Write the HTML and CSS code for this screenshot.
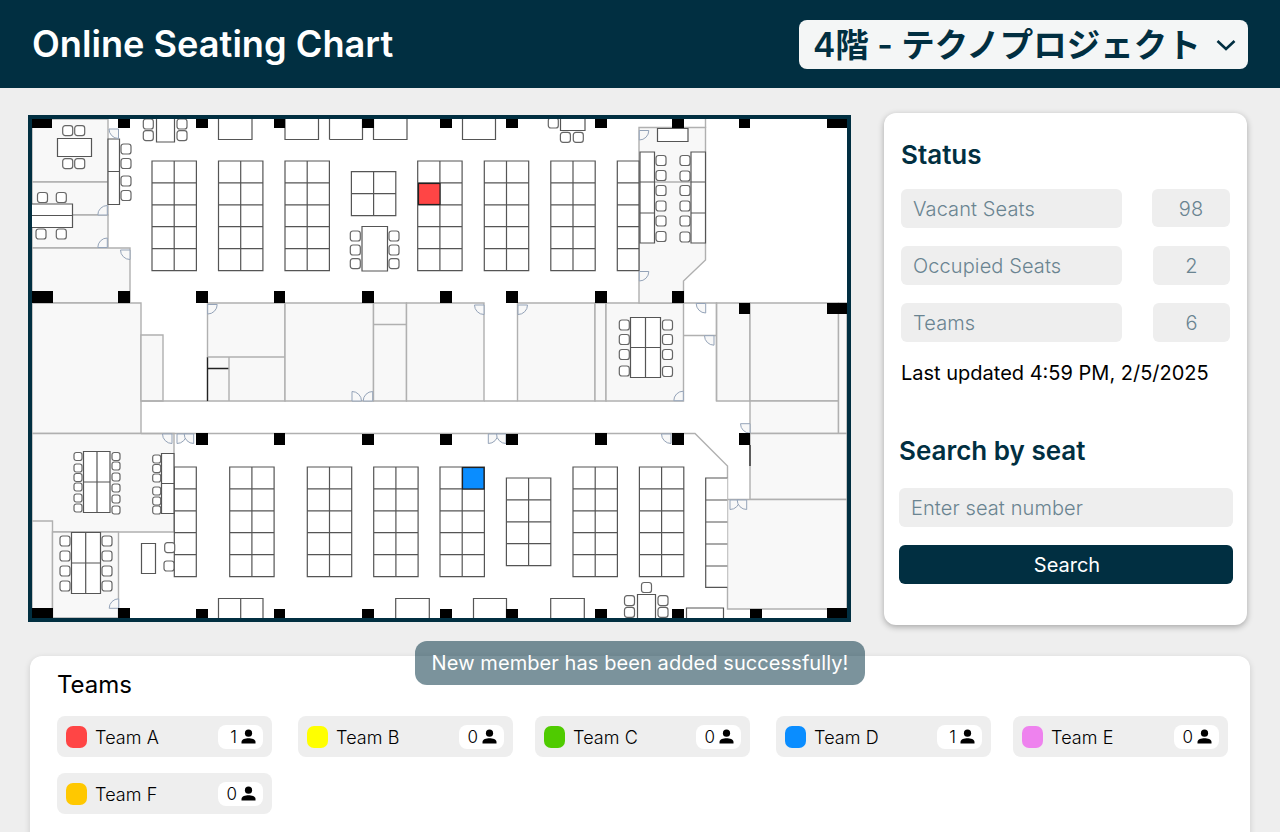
FILE: index.html
```html
<!DOCTYPE html>
<html lang="en">
<head>
    <meta charset="UTF-8">
    <meta name="viewport" content="width=device-width, initial-scale=1.0">
    <title>Online Seating Chart</title>
    <link rel="stylesheet" href="styles.css">
</head>
<body>
    <header class="topbar">
        <h1>Online Seating Chart</h1>
        <div class="floor-select">
            <span class="floor-name">4階 - テクノプロジェクト</span>
            <svg class="chevron" width="20" height="12" viewBox="0 0 20 12"><path d="M1.5 2l8.5 8 8.5-8"/></svg>
        </div>
    </header>

    <div class="toast">New member has been added successfully!</div>

    <main class="content">
        <div class="map">
            <svg width="815" height="499" viewBox="32 119 815 499">
                <defs>
                    <path id="b5" d="M0 0h44.4v109.6H0z M22.2 0v109.6 M0 21.9h44.4 M0 43.8h44.4 M0 65.7h44.4 M0 87.7h44.4"/>
                    <path id="b4" d="M0 0h44.4v87.7H0z M22.2 0v87.7 M0 21.9h44.4 M0 43.8h44.4 M0 65.7h44.4"/>
                    <path id="d-ll" d="M0 0H-9.5A9.5 9.5 0 0 0 0 9.5Z"/>
                    <path id="d-ul" d="M0 0H-9.5A9.5 9.5 0 0 1 0 -9.5Z"/>
                    <path id="d-lr" d="M0 0H9.5A9.5 9.5 0 0 1 0 9.5Z"/>
                    <path id="d-ur" d="M0 0H9.5A9.5 9.5 0 0 0 0 -9.5Z"/>
                    <rect id="c" width="10" height="10" rx="2.6"/>
                    <rect id="s" width="8" height="8" rx="2.2"/>
                </defs>

                <!-- rooms -->
                <g class="room">
                    <path d="M32 119H108V182H32z"/>
                    <path d="M32 182H108V215H32z"/>
                    <path d="M32 215H108V248H32z"/>
                    <path d="M32 248H130V303H32z"/>
                    <path d="M32 303H141V433.5H32z"/>
                    <path d="M141 335H163V401H141z"/>
                    <path d="M207.5 303H285V401H207.5z"/>
                    <path d="M285 303H373.5V401H285z"/>
                    <path d="M373.5 303H406.5V401H373.5z"/>
                    <path d="M373.5 324.5H406.5"/>
                    <path d="M406.5 303H484V401H406.5z"/>
                    <path d="M517.5 303H595V401H517.5z"/>
                    <path d="M595 303H606V401H595z"/>
                    <path d="M606 303H683.5V401H606z"/>
                    <path d="M716.5 303H750V401H716.5z"/>
                    <path d="M750 303H838.5V401H750z"/>
                    <path d="M750 401H838.5V433.5H750z"/>
                    <path d="M838.5 303H847V433.5H838.5z"/>
                    <path d="M750 433.5H847V499.5H750z"/>
                    <path d="M727.5 499.5H847V609H727.5z"/>
                    <path d="M32 433.5H174V532H32z"/>
                    <path d="M32 521H52.5V618H32z"/>
                    <path d="M52.5 532H118.5V618H52.5z"/>
                    <path d="M639 127.5H705.5V260L683.5 281V303H639z"/>
                    <path class="plain" d="M683.5 303H716.5V401 M683.5 335.5H716.5"/>
                    <path class="plain" d="M141 401H207.5 M484 401H517.5 M141 433.5H695L727.5 466V499.5 M705.5 119V128"/>
                    <path class="plain" d="M639 182H705.5"/>
                </g>
                <path class="thick" d="M207.5 357V401 M207.5 368.5H229"/>
                <path class="room-line" d="M207.5 357H285 M229 357V401"/>
                <path class="thick" d="M750 445V466"/>

                <!-- desks -->
                <g class="desk">
                    <use href="#b5" x="152" y="161"/>
                    <use href="#b5" x="218.5" y="161"/>
                    <use href="#b5" x="285" y="161"/>
                    <use href="#b5" x="417.7" y="161"/>
                    <use href="#b5" x="484.3" y="161"/>
                    <use href="#b5" x="550.8" y="161"/>
                    <path d="M617.3 161H639V270.6H617.3z M617.3 182.9H639 M617.3 204.8H639 M617.3 226.7H639 M617.3 248.7H639"/>
                    <path d="M351.4 171.7h44.4v44H351.4z M373.6 171.7v44 M351.4 193.7h44.4"/>

                    <use href="#b5" x="229.7" y="467"/>
                    <use href="#b5" x="307.3" y="467"/>
                    <use href="#b5" x="373.7" y="467"/>
                    <use href="#b5" x="440" y="467"/>
                    <use href="#b4" x="506.4" y="478"/>
                    <use href="#b5" x="573" y="467"/>
                    <use href="#b5" x="639.4" y="467"/>
                    <path d="M174.3 467H196.3V576.6H174.3z M174.3 488.9H196.3 M174.3 510.8H196.3 M174.3 532.7H196.3 M174.3 554.7H196.3"/>
                    <path d="M727.3 478H705.7V587.4H727.3 M705.7 500H727.3 M705.7 522H727.3 M705.7 544H727.3 M705.7 566H727.3"/>

                    <!-- tables along the walls -->
                    <path d="M156.5 119V142H174.5V119"/>
                    <path d="M218.5 119V139.5H252V119 M285 119V139.5H318.5V119 M329.5 139.5H362.5V119 M329.5 119V139.5 M373.5 119V139.5H407V119 M462.5 119V139.5H495.5V119"/>
                    <path d="M560.5 119V130.5H585V119"/>
                    <path d="M657.5 128.5H688V141.5H657.5z"/>
                    <path d="M57.5 138.5H91.5V156.5H57.5z"/>
                    <path d="M108 139H119.5V171.5H108z M108 171.5H119.5V204.5H108z"/>
                    <path d="M32 204H72.5V227.5H32 M32 215.5H72.5"/>
                    <path d="M362 226.5H387.5V271H362z"/>
                    <path d="M640 152H654.5V243H640z M640 182H654.5 M640 213H654.5"/>
                    <path d="M691 152H705.5V243H691z M691 182H705.5 M691 213H705.5"/>
                    <path d="M630.5 317.5H660.5V377.5H630.5z M645.5 317.5V377.5 M630.5 347.5H660.5"/>
                    <path d="M83.5 451.5H110V512.5H83.5z M97 451.5V512.5 M83.5 482H110"/>
                    <path d="M161.5 453.5H174V513.5H161.5z M161.5 483.5H174"/>
                    <path d="M71.5 532.5H100.5V593.5H71.5z M85.7 532.5V593.5 M71.5 563H100.5"/>
                    <path d="M141.5 543.5H155.5V573.5H141.5z"/>
                    <path d="M218.5 618V598.5H263V618 M240.7 598.5V618 M395.7 618V598.5H429.3V618 M473.5 618V598.5H506.5V618 M550.7 618V598.5H584.3V618"/>
                    <path d="M637.5 618V594.5H655.5V618 M686.5 618V608H723.5V618"/>
                </g>

                <!-- chairs -->
                <g class="chair">
                    <use href="#c" x="62.7" y="125.7"/><use href="#c" x="74.7" y="125.7"/>
                    <use href="#c" x="62.7" y="158.7"/><use href="#c" x="74.7" y="158.7"/>
                    <use href="#c" x="121" y="144"/><use href="#c" x="121" y="158.5"/>
                    <use href="#c" x="121" y="176"/><use href="#c" x="121" y="190.5"/>
                    <use href="#c" x="37.5" y="192.5"/><use href="#c" x="56.3" y="192.5"/>
                    <use href="#c" x="36" y="229"/><use href="#c" x="56.3" y="229"/>
                    <use href="#c" x="143.3" y="119"/><use href="#c" x="143.3" y="130.7"/>
                    <use href="#c" x="177" y="119"/><use href="#c" x="177" y="130.7"/>
                    <use href="#c" x="350.3" y="231"/><use href="#c" x="350.3" y="245"/><use href="#c" x="350.3" y="258.7"/>
                    <use href="#c" x="389" y="231"/><use href="#c" x="389" y="245"/><use href="#c" x="389" y="258.7"/>
                    <use href="#c" x="548.3" y="118"/>
                    <use href="#c" x="560.4" y="132.4"/><use href="#c" x="573.3" y="132.4"/>
                    <use href="#c" x="656" y="155.5"/><use href="#c" x="656" y="170.5"/><use href="#c" x="656" y="185.5"/>
                    <use href="#c" x="656" y="201"/><use href="#c" x="656" y="216"/><use href="#c" x="656" y="231.5"/>
                    <use href="#c" x="680" y="155.5"/><use href="#c" x="680" y="171"/><use href="#c" x="680" y="185.5"/>
                    <use href="#c" x="680" y="201"/><use href="#c" x="680" y="216"/><use href="#c" x="680" y="232"/>
                    <use href="#c" x="619.3" y="320"/><use href="#c" x="619.3" y="334.5"/><use href="#c" x="619.3" y="349.5"/><use href="#c" x="619.3" y="366"/>
                    <use href="#c" x="662.5" y="320"/><use href="#c" x="662.5" y="334.5"/><use href="#c" x="662.5" y="349.5"/><use href="#c" x="662.5" y="366.5"/>
                    <use href="#c" x="60" y="536"/><use href="#c" x="60" y="551"/><use href="#c" x="60" y="566"/><use href="#c" x="60" y="581"/>
                    <use href="#c" x="102" y="536"/><use href="#c" x="102" y="551"/><use href="#c" x="102" y="566"/><use href="#c" x="102" y="581"/>
                    <use href="#c" x="164.7" y="542.7"/><use href="#c" x="164" y="561"/>
                    <use href="#c" x="641.5" y="582.5"/>
                    <use href="#c" x="624.5" y="595.7"/><use href="#c" x="624.5" y="607.3"/>
                    <use href="#c" x="658" y="595.7"/><use href="#c" x="658" y="607.3"/>
                    <use href="#s" x="74" y="452.5"/><use href="#s" x="74" y="464"/><use href="#s" x="74" y="473.5"/>
                    <use href="#s" x="74" y="483"/><use href="#s" x="74" y="494"/><use href="#s" x="74" y="504"/>
                    <use href="#s" x="112" y="452.5"/><use href="#s" x="112" y="462"/><use href="#s" x="112" y="473"/>
                    <use href="#s" x="112" y="484"/><use href="#s" x="112" y="495"/><use href="#s" x="112" y="506"/>
                    <use href="#s" x="152.7" y="455"/><use href="#s" x="152.7" y="464.5"/><use href="#s" x="152.7" y="474"/>
                    <use href="#s" x="152.7" y="487"/><use href="#s" x="152.7" y="497"/><use href="#s" x="152.7" y="506"/>
                </g>

                <!-- doors -->
                <g class="door">
                    <use href="#d-ll" x="118.5" y="129"/>
                    <use href="#d-ul" x="107.3" y="215"/>
                    <use href="#d-ul" x="107.3" y="247.5"/>
                    <use href="#d-ll" x="130" y="250"/>
                    <use href="#d-lr" x="207.7" y="304.5"/>
                    <use href="#d-lr" x="639.3" y="130.5"/>
                    <use href="#d-lr" x="639.3" y="271.5"/>
                    <use href="#d-ll" x="484" y="305"/>
                    <use href="#d-lr" x="518" y="305"/>
                    <use href="#d-ll" x="705.7" y="303.5"/>
                    <use href="#d-ll" x="714" y="335.7"/>
                    <use href="#d-ur" x="352" y="401"/>
                    <use href="#d-ul" x="372.7" y="401"/>
                    <use href="#d-ll" x="172" y="434"/>
                    <use href="#d-lr" x="177" y="434"/>
                    <use href="#d-ll" x="193.7" y="434"/>
                    <use href="#d-ul" x="118.7" y="608.3"/>
                    <use href="#d-ul" x="683.3" y="400.7"/>
                    <use href="#d-lr" x="488.3" y="434"/>
                    <use href="#d-ll" x="506" y="434"/>
                    <use href="#d-ll" x="671" y="434"/>
                    <use href="#d-ll" x="750" y="423.7"/>
                    <use href="#d-lr" x="730" y="500"/>
                    <use href="#d-ll" x="746.7" y="500"/>
                </g>

                <!-- pillars -->
                <g class="pillar">
                    <path d="M32 119H52V128H32z M118 119H130V128H118z M196 119H208V128H196z M274 119H285V128H274z M362 119H374V128H362z M440 119H452V128H440z M506 119H518V128H506z M595 119H607V128H595z M672 119H684V128H672z M739 119H750V128H739z M827 119H847V128H827z"/>
                    <path d="M32 291H53V303H32z M118 291H130V303H118z M196 291H208V303H196z M274 291H285V303H274z M362 291H374V303H362z M440 291H452V303H440z M506 291H518V303H506z M595 291H607V303H595z M672 291H684V303H672z"/>
                    <path d="M739 303H750V314H739z M827 303H847V314H827z"/>
                    <path d="M196 433H208V445H196z M274 433H285V445H274z M362 434H374V445H362z M440 434H452V445H440z M506 434H518V445H506z M595 433H607V445H595z M672 433H684V445H672z M739 433H750V445H739z"/>
                    <path d="M32 608H53V618H32z M118 608H130V618H118z M196 609H208V618H196z M274 609H285V618H274z M362 609H374V618H362z M440 609H452V618H440z M506 609H518V618H506z M595 609H607V618H595z M672 609H684V618H672z M750 609H762V618H750z M827 608H847V618H827z"/>
                </g>

                <!-- occupied seats -->
                <rect class="seat seat-red" x="418.5" y="183.5" width="21.5" height="21"/>
                <rect class="seat seat-blue" x="462.5" y="467.5" width="21.5" height="21.5"/>
            </svg>
        </div>

        <aside class="side-card">
            <h2>Status</h2>
            <div class="stat-row">
                <div class="stat-label">Vacant Seats</div>
                <div class="stat-value wide">98</div>
            </div>
            <div class="stat-row">
                <div class="stat-label">Occupied Seats</div>
                <div class="stat-value">2</div>
            </div>
            <div class="stat-row">
                <div class="stat-label">Teams</div>
                <div class="stat-value">6</div>
            </div>
            <p class="updated">Last updated 4:59 PM, 2/5/2025</p>

            <h2 class="search-title">Search by seat</h2>
            <div class="search-input">Enter seat number</div>
            <div class="search-button">Search</div>
        </aside>
    </main>

    <section class="teams">
        <h3>Teams</h3>
        <div class="team-list">
            <div class="team-chip">
                <span class="swatch red"></span><span class="team-name">Team A</span>
                <span class="count">1<svg width="15" height="15" viewBox="0 0 15 15"><use href="#person"/></svg></span>
            </div>
            <div class="team-chip">
                <span class="swatch yellow"></span><span class="team-name">Team B</span>
                <span class="count">0<svg width="15" height="15" viewBox="0 0 15 15"><use href="#person"/></svg></span>
            </div>
            <div class="team-chip">
                <span class="swatch green"></span><span class="team-name">Team C</span>
                <span class="count">0<svg width="15" height="15" viewBox="0 0 15 15"><use href="#person"/></svg></span>
            </div>
            <div class="team-chip">
                <span class="swatch blue"></span><span class="team-name">Team D</span>
                <span class="count">1<svg width="15" height="15" viewBox="0 0 15 15"><use href="#person"/></svg></span>
            </div>
            <div class="team-chip">
                <span class="swatch pink"></span><span class="team-name">Team E</span>
                <span class="count">0<svg width="15" height="15" viewBox="0 0 15 15"><use href="#person"/></svg></span>
            </div>
            <div class="team-chip">
                <span class="swatch orange"></span><span class="team-name">Team F</span>
                <span class="count">0<svg width="15" height="15" viewBox="0 0 15 15"><use href="#person"/></svg></span>
            </div>
        </div>
    </section>

    <svg class="icon-defs" width="0" height="0">
        <defs>
            <g id="person">
                <circle cx="7.5" cy="4.2" r="3.6"/>
                <path d="M.5 14.5v-1.6c0-2.6 4-3.6 7-3.6s7 1 7 3.6v1.6z"/>
            </g>
        </defs>
    </svg>
</body>
</html>
```

FILE: styles.css
```css
html, body {
    margin: 0;
    padding: 0;
    background-color: #eeeeee;
    font-family: Inter, "Noto Sans CJK JP", sans-serif;
    overflow: hidden;
}
.topbar {
    display: flex;
    justify-content: space-between;
    align-items: center;
    height: 88px;
    padding: 0 32px;
    box-sizing: border-box;
    background-color: #012f41;
}
.topbar h1 {
    margin: 0;
    color: #ffffff;
    font-size: 36.2px;
    font-weight: 600;
}
.floor-select {
    display: flex;
    align-items: center;
    justify-content: space-between;
    width: 449px;
    height: 49px;
    padding: 0 12px 0 14px;
    box-sizing: border-box;
    border-radius: 8px;
    background-color: #f4f6f6;
    color: #012f41;
    font-size: 33.5px;
    font-weight: 600;
}
.floor-name {
    margin-top: -3px;
}
.chevron {
    margin-top: 2px;
    fill: none;
    stroke: #012f41;
    stroke-width: 2.6;
}
.toast {
    position: absolute;
    top: 641px;
    left: 415px;
    width: 450px;
    height: 44px;
    line-height: 44px;
    border-radius: 12px;
    background-color: rgba(1, 47, 65, 0.52);
    color: #ffffff;
    font-size: 20px;
    letter-spacing: 0.08px;
    text-align: center;
    z-index: 10;
}
.content {
    display: flex;
    align-items: flex-start;
    padding: 25px 0 0 28px;
}
.map {
    width: 823px;
    height: 507px;
    margin-top: 2px;
    margin-right: 33px;
    box-sizing: border-box;
    border: 4px solid #012f41;
    background-color: #ffffff;
}
.map svg {
    display: block;
}
.room path {
    fill: #f8f8f8;
    stroke: #b0b0b0;
    stroke-width: 1.4;
}
.room path.plain {
    fill: none;
}
.room-line {
    fill: none;
    stroke: #b0b0b0;
    stroke-width: 1.4;
}
.thick {
    fill: none;
    stroke: #222222;
    stroke-width: 1.3;
}
.desk {
    fill: #ffffff;
    stroke: #555555;
    stroke-width: 1.2;
}
.chair {
    fill: #ffffff;
    stroke: #666666;
    stroke-width: 1.2;
}
.door {
    fill: #f8f8f8;
    stroke: #94a3b8;
    stroke-width: 1;
}
.pillar {
    fill: #000000;
}
.seat {
    stroke: #222222;
    stroke-width: 1.2;
}
.seat-red {
    fill: #ff4545;
}
.seat-blue {
    fill: #0a8dff;
}
.side-card {
    width: 363px;
    height: 512px;
    padding: 24px 17px 0;
    box-sizing: border-box;
    border-radius: 12px;
    background-color: #ffffff;
    box-shadow: 0 2px 6px rgba(0, 0, 0, 0.3);
}
.side-card h2 {
    margin: 0 0 17px;
    height: 35px;
    line-height: 35px;
    color: #012f41;
    font-size: 26px;
    font-weight: 600;
}
.stat-row {
    display: flex;
    justify-content: space-between;
    align-items: flex-start;
    width: 329px;
    margin-bottom: 18px;
}
.stat-label, .stat-value, .search-input {
    height: 39px;
    line-height: 41px;
    border-radius: 6px;
    background-color: #eeeeee;
    color: #6a8491;
    font-size: 20px;
    font-weight: 300;
    letter-spacing: 0.1px;
}
.stat-label {
    width: 221px;
    padding-left: 12px;
    box-sizing: border-box;
}
.stat-value {
    width: 77px;
    text-align: center;
}
.stat-value.wide {
    width: 78px;
    height: 38px;
}
.updated {
    margin: 19px 0 0;
    color: #000000;
    font-size: 20px;
    height: 24px;
    line-height: 24px;
}
.side-card h2.search-title {
    margin: 48px 0 20px -2px;
}
.search-input {
    width: 334px;
    margin-left: -2px;
    padding-left: 12px;
    box-sizing: border-box;
}
.search-button {
    width: 334px;
    height: 39px;
    line-height: 40px;
    margin: 18px 0 0 -2px;
    padding-left: 2px;
    box-sizing: border-box;
    border-radius: 6px;
    background-color: #012f41;
    color: #ffffff;
    font-size: 20px;
    text-align: center;
}
.teams {
    width: 1220px;
    height: 200px;
    margin: 31px 0 0 30px;
    padding: 12px 20px 0 27px;
    box-sizing: border-box;
    border-radius: 12px;
    background-color: #ffffff;
    box-shadow: 0 2px 6px rgba(0, 0, 0, 0.15);
}
.teams h3 {
    margin: 0 0 17px;
    height: 31px;
    line-height: 33px;
    color: #000000;
    font-size: 24px;
    font-weight: 400;
}
.team-list {
    display: flex;
    flex-wrap: wrap;
    gap: 16px 22px;
}
.team-chip {
    display: flex;
    align-items: center;
    width: 215px;
    height: 41px;
    padding: 0 9px;
    box-sizing: border-box;
    border-radius: 8px;
    background-color: #eeeeee;
}
.team-chip:nth-child(5n+2), .team-chip:nth-child(5n+4) {
    margin-left: 4px;
}
.swatch {
    width: 21px;
    height: 22px;
    margin-right: 8px;
    border-radius: 7px;
}
.swatch.red { background-color: #ff4545; }
.swatch.yellow { background-color: #ffff00; }
.swatch.green { background-color: #4fcb00; }
.swatch.blue { background-color: #0a8dff; }
.swatch.pink { background-color: #ee82ee; }
.swatch.orange { background-color: #ffc800; }
.team-name {
    flex: 1;
    margin-top: 2px;
    color: #000000;
    font-size: 18px;
    font-weight: 300;
    letter-spacing: 0.1px;
}
.count {
    display: flex;
    align-items: center;
    justify-content: flex-end;
    gap: 4px;
    width: 45px;
    height: 24px;
    padding-right: 7px;
    box-sizing: border-box;
    border-radius: 8px;
    background-color: #ffffff;
    color: #000000;
    font-size: 17px;
    font-weight: 300;
}
.icon-defs {
    position: absolute;
}
```
